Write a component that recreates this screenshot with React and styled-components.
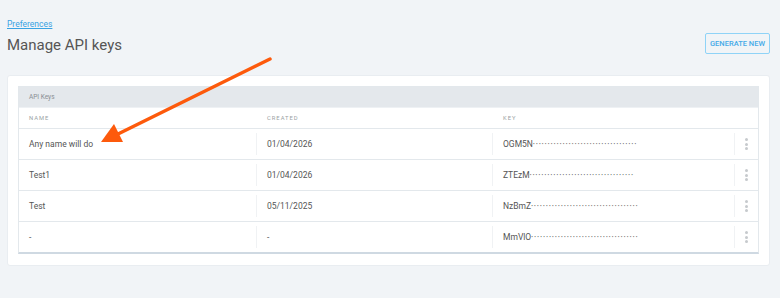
import styled, {createGlobalStyle} from "styled-components";

const GlobalStyle = createGlobalStyle`
    body {
        margin: 0;
        background: #f1f4f7;
        font-family: Roboto, "Liberation Sans", sans-serif;
        color: #555;
    }
`;

const Page = styled.div`
    position: relative;
    width: 780px;
    height: 298px;
    box-sizing: border-box;
    padding: 18px 10px 0 7px;
`;

const TopBar = styled.div`
    display: flex;
    justify-content: space-between;
    align-items: flex-start;
`;

const Crumb = styled.a`
    display: block;
    font-size: 8.5px;
    line-height: 12px;
    color: #3aa3e3;
    text-decoration: underline;
`;

const Title = styled.h1`
    margin: 6px 0 0;
    font-size: 15px;
    font-weight: 400;
    line-height: 18px;
    color: #555;
`;

const Button = styled.button`
    margin-top: 15px;
    height: 21px;
    padding: 0 4px;
    border: 1px solid #8fd3f7;
    border-radius: 2px;
    background: transparent;
    color: #45aae8;
    font-family: inherit;
    font-size: 7.5px;
    font-weight: 500;
`;

const Card = styled.div`
    margin-top: 21px;
    background: #fff;
    border-radius: 3px;
    border: 1px solid #e9edf1;
    padding: 10px 10px 11px;
`;

const Table = styled.div`
    border: 1px solid #e3e8ec;
    border-bottom: 2px solid #cfd9e2;
`;

const Caption = styled.div`
    height: 20px;
    display: flex;
    align-items: center;
    padding-left: 10px;
    background: #e4e8ec;
    font-size: 6.5px;
    color: #8a8f94;
`;

const Row = styled.div`
    display: grid;
    grid-template-columns: 237px 236px 242px 1fr;
    height: ${p => p.$head ? "21px" : "31px"};
    border-top: 1px solid ${p => p.$head ? "#eef1f4" : "#e3e8ec"};
    box-sizing: border-box;
`;

const Cell = styled.div`
    display: flex;
    align-items: center;
    padding-left: 10px;
    margin: ${p => p.$head ? "0" : "4px 0"};
    border-left: ${p => p.$first || p.$head ? "none" : "1px solid #f0f2f4"};
    font-size: 8.5px;
    color: #555;
    white-space: nowrap;
    overflow: hidden;
`;

const HeadCell = styled(Cell)`
    padding-left: ${p => p.$first ? "10px" : "11px"};
    font-size: 5.8px;
    letter-spacing: 1px;
    color: #9a9fa4;
`;

const Dots = styled.span`
    font-size: 5px;
    letter-spacing: 1.3px;
    color: #666;
`;

const ActionCell = styled(Cell)`
    padding-left: 0;
    justify-content: center;
`;

const Kebab = styled.div`
    display: flex;
    flex-direction: column;
    gap: 1.5px;

    span {
        width: 3px;
        height: 3px;
        border-radius: 50%;
        background: #c6cacd;
    }
`;

const Arrow = styled.svg`
    position: absolute;
    left: 0;
    top: 0;
    pointer-events: none;
`;

const rows = [
    {name: "Any name will do", created: "01/04/2026", key: "OGM5N", dots: 35},
    {name: "Test1", created: "01/04/2026", key: "ZTEzM", dots: 35},
    {name: "Test", created: "05/11/2025", key: "NzBmZ", dots: 36},
    {name: "-", created: "-", key: "MmVlO", dots: 36},
];

export default function App() {
    return (
        <Page>
            <GlobalStyle/>
            <TopBar>
                <div>
                    <Crumb href="#">Preferences</Crumb>
                    <Title>Manage API keys</Title>
                </div>
                <Button>GENERATE NEW</Button>
            </TopBar>
            <Card>
                <Table>
                    <Caption>API Keys</Caption>
                    <Row $head>
                        <HeadCell $first $head>NAME</HeadCell>
                        <HeadCell $head>CREATED</HeadCell>
                        <HeadCell $head>KEY</HeadCell>
                        <HeadCell $head/>
                    </Row>
                    {rows.map((r, i) => (
                        <Row key={i}>
                            <Cell $first>{r.name}</Cell>
                            <Cell>{r.created}</Cell>
                            <Cell>{r.key}<Dots>{"•".repeat(r.dots)}</Dots></Cell>
                            <ActionCell>
                                <Kebab><span/><span/><span/></Kebab>
                            </ActionCell>
                        </Row>
                    ))}
                </Table>
            </Card>
            <Arrow width="780" height="298" viewBox="0 0 780 298">
                <line x1="270" y1="59" x2="118" y2="134" stroke="#fd5a0c" strokeWidth="3.5" strokeLinecap="round"/>
                <polygon points="101,142 114,124 123,142" fill="#fd5a0c"/>
            </Arrow>
        </Page>
    );
}
